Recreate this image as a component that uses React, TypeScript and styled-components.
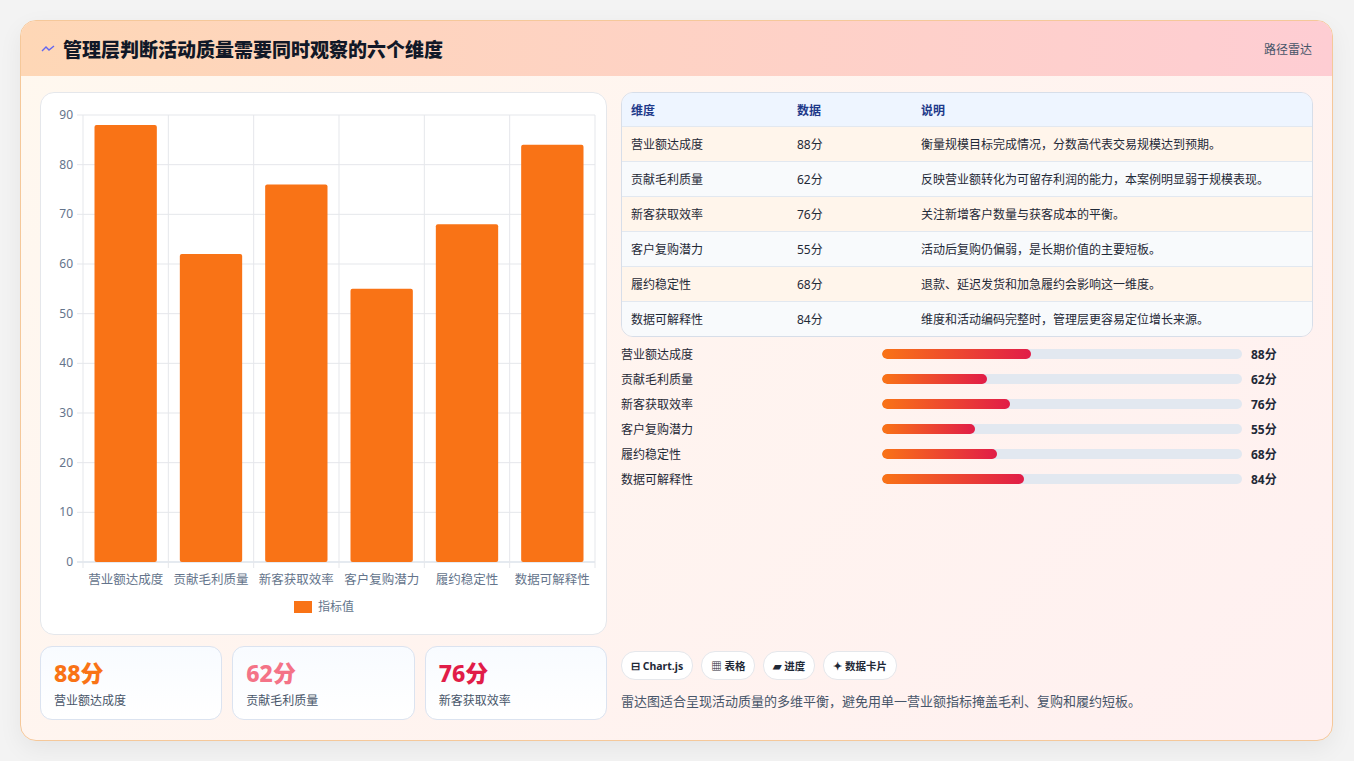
import React from 'react'
import styled, { createGlobalStyle } from 'styled-components'

const Global = createGlobalStyle`
  body { margin: 0; background: #f3f3f3; font-family: "Noto Sans", "Noto Sans CJK SC", sans-serif; }
`

const data = [
  { name: '营业额达成度', v: 88, note: '衡量规模目标完成情况，分数高代表交易规模达到预期。' },
  { name: '贡献毛利质量', v: 62, note: '反映营业额转化为可留存利润的能力，本案例明显弱于规模表现。' },
  { name: '新客获取效率', v: 76, note: '关注新增客户数量与获客成本的平衡。' },
  { name: '客户复购潜力', v: 55, note: '活动后复购仍偏弱，是长期价值的主要短板。' },
  { name: '履约稳定性', v: 68, note: '退款、延迟发货和加急履约会影响这一维度。' },
  { name: '数据可解释性', v: 84, note: '维度和活动编码完整时，管理层更容易定位增长来源。' },
]

const Page = styled.div`
  padding: 20px;
  height: 761px;
  box-sizing: border-box;
`
const Card = styled.div`
  width: 1313px;
  height: 721px;
  box-sizing: border-box;
  border: 1px solid #f5c89a;
  border-radius: 16px;
  overflow: hidden;
  background: linear-gradient(135deg, #fff8ef, #fff0f0);
  box-shadow: 0 8px 24px rgba(0, 0, 0, 0.06);
  display: flex;
  flex-direction: column;
`
const Header = styled.div`
  height: 55px;
  flex: none;
  display: flex;
  align-items: center;
  justify-content: space-between;
  padding: 0 20px;
  background: linear-gradient(90deg, #fed7b6, #fecdd3);
`
const Title = styled.h1`
  margin: 0;
  font-size: 19px;
  font-weight: 800;
  color: #111827;
  display: flex;
  align-items: center;
  gap: 8px;
`
const Tag = styled.span`
  font-size: 12px;
  color: #475569;
`
const Body = styled.div`
  flex: 1;
  display: grid;
  grid-template-columns: 567px 1fr;
  gap: 14px;
  padding: 16px 19px 18px 19px;
`
const Col = styled.div`
  display: flex;
  flex-direction: column;
  gap: 11px;
  min-height: 0;
`
const ChartCard = styled.div`
  height: 543px;
  box-sizing: border-box;
  background: #fff;
  border: 1px solid #e5e7eb;
  border-radius: 14px;
`
const Stats = styled.div`
  display: grid;
  grid-template-columns: repeat(3, 1fr);
  gap: 10px;
`
const Stat = styled.div`
  height: 74px;
  box-sizing: border-box;
  border: 1px solid #dbe3f0;
  border-radius: 12px;
  background: linear-gradient(180deg, #f8fbff, #ffffff);
  padding: 10px 13px;
`
const StatNum = styled.div<{ c: string }>`
  font-size: 23px;
  font-weight: 800;
  color: ${(p) => p.c};
  line-height: 32px;
`
const StatLabel = styled.div`
  font-size: 12px;
  color: #475569;
  margin-top: 2px;
`
const Table = styled.div`
  border: 1px solid #d7dee9;
  border-radius: 12px;
  overflow: hidden;
  font-size: 12px;
  color: #1f2937;
`
const Row = styled.div<{ head?: boolean; alt?: boolean }>`
  display: grid;
  grid-template-columns: 166px 124px 1fr;
  height: ${(p) => (p.head ? 33 : 35)}px;
  align-items: center;
  padding-left: 9px;
  background: ${(p) => (p.head ? '#eef5ff' : p.alt ? '#f8fafc' : '#fff5eb')};
  color: ${(p) => (p.head ? '#1e3a8a' : '#1f2937')};
  font-weight: ${(p) => (p.head ? 700 : 400)};
  border-top: ${(p) => (p.head ? 'none' : '1px solid #e2e8f0')};
  box-sizing: border-box;
`
const Bars = styled.div`
  margin-top: -3px;
  display: flex;
  flex-direction: column;
  gap: 7px;
`
const BarRow = styled.div`
  display: grid;
  grid-template-columns: 261px 360px 1fr;
  align-items: center;
  height: 18px;
  font-size: 12px;
  color: #1f2937;
`
const Track = styled.div`
  height: 10px;
  border-radius: 5px;
  background: #e2e8f0;
  overflow: hidden;
`
const Fill = styled.div`
  height: 100%;
  border-radius: 5px;
  background: linear-gradient(90deg, #f97316, #e11d48);
`
const BarVal = styled.span`
  font-weight: 700;
  padding-left: 9px;
`
const Spacer = styled.div`
  flex: 1;
`
const Chips = styled.div`
  display: flex;
  gap: 8px;
`
const Chip = styled.span`
  height: 27px;
  padding: 0 9px;
  display: inline-flex;
  align-items: center;
  gap: 3px;
  border-radius: 14px;
  background: #fff;
  border: 1px solid #e5e7eb;
  font-size: 10.5px;
  font-weight: 700;
  color: #1f2937;
`
const Foot = styled.p`
  margin: 0 0 12px;
  font-size: 13px;
  color: #475569;
`

const Chart = () => {
  const x0 = 42, x1 = 554, yTop = 22, yBot = 469
  const cw = (x1 - x0) / 6
  const y = (v: number) => yBot - ((yBot - yTop) * v) / 90
  return (
    <svg width="566" height="541" style={{ display: 'block' }}>
      {Array.from({ length: 10 }, (_, i) => (
        <g key={i}>
          <line x1={x0 - 6} x2={x1} y1={y(i * 10)} y2={y(i * 10)} stroke={i === 0 ? '#cbd5e1' : '#e5e7eb'} />
          <text x={x0 - 10} y={y(i * 10) + 4} textAnchor="end" fontSize="12" fill="#64748b">{i * 10}</text>
        </g>
      ))}
      {Array.from({ length: 7 }, (_, i) => (
        <line key={i} x1={x0 + i * cw} x2={x0 + i * cw} y1={yTop} y2={yBot + 6} stroke="#e5e7eb" />
      ))}
      {data.map((d, i) => (
        <g key={d.name}>
          <rect x={x0 + i * cw + 11.5} y={y(d.v)} width={cw - 23} height={yBot - y(d.v)} rx="2" fill="#f97316" />
          <text x={x0 + i * cw + cw / 2} y={yBot + 22} textAnchor="middle" fontSize="12.5" fill="#64748b">{d.name}</text>
        </g>
      ))}
      <rect x="253" y="508" width="18" height="12" fill="#f97316" />
      <text x="277" y="518" fontSize="12" fill="#64748b">指标值</text>
    </svg>
  )
}

export default function App() {
  return (
    <Page>
      <Global />
      <Card>
        <Header>
          <Title>
            <svg width="14" height="10" viewBox="0 0 14 10">
              <path d="M1 7 L5 3 L8 6 L13 2" stroke="#6366f1" strokeWidth="1.4" fill="none" />
            </svg>
            管理层判断活动质量需要同时观察的六个维度
          </Title>
          <Tag>路径雷达</Tag>
        </Header>
        <Body>
          <Col>
            <ChartCard>
              <Chart />
            </ChartCard>
            <Stats>
              <Stat><StatNum c="#f97316">88分</StatNum><StatLabel>营业额达成度</StatLabel></Stat>
              <Stat><StatNum c="#f47387">62分</StatNum><StatLabel>贡献毛利质量</StatLabel></Stat>
              <Stat><StatNum c="#e11d48">76分</StatNum><StatLabel>新客获取效率</StatLabel></Stat>
            </Stats>
          </Col>
          <Col>
            <Table>
              <Row head><span>维度</span><span>数据</span><span>说明</span></Row>
              {data.map((d, i) => (
                <Row key={d.name} alt={i % 2 === 1}>
                  <span>{d.name}</span><span>{d.v}分</span><span>{d.note}</span>
                </Row>
              ))}
            </Table>
            <Bars>
              {data.map((d) => (
                <BarRow key={d.name}>
                  <span>{d.name}</span>
                  <Track><Fill style={{ width: `${d.v * 0.4694}%` }} /></Track>
                  <BarVal>{d.v}分</BarVal>
                </BarRow>
              ))}
            </Bars>
            <Spacer />
            <Chips>
              <Chip>⊟ Chart.js</Chip>
              <Chip>▦ 表格</Chip>
              <Chip>▰ 进度</Chip>
              <Chip>✦ 数据卡片</Chip>
            </Chips>
            <Foot>雷达图适合呈现活动质量的多维平衡，避免用单一营业额指标掩盖毛利、复购和履约短板。</Foot>
          </Col>
        </Body>
      </Card>
    </Page>
  )
}
